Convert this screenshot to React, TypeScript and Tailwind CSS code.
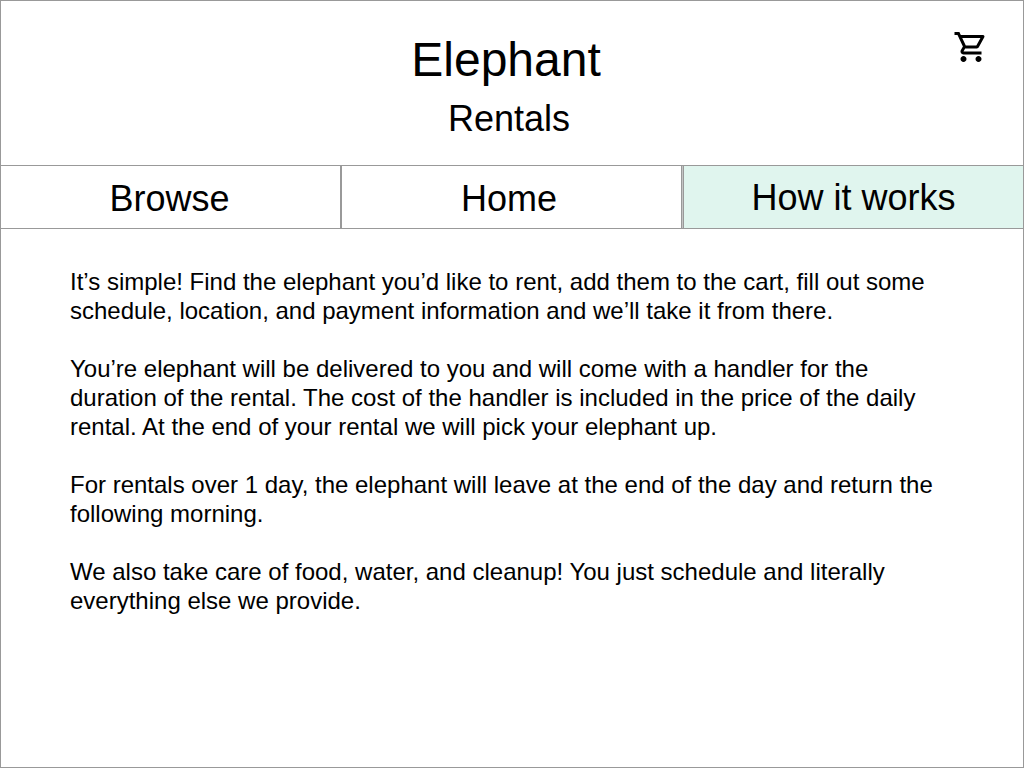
export default function App() {
  return (
    <div className="relative flex h-[768px] w-[1024px] flex-col overflow-hidden border border-[#999] bg-white text-black [font-family:'Liberation_Sans',Arial,sans-serif]">
      <header className="relative flex h-[164px] flex-col items-center">
        <h1 className="mt-[30px] mr-[12px] text-[48px] leading-[58px]">Elephant</h1>
        <p className="mt-[8px] mr-[6px] text-[36px] leading-[44px]">Rentals</p>
        <svg className="absolute left-[952px] top-[27.5px] h-[36px] w-[36px]" viewBox="0 0 24 24" fill="currentColor">
          <path d="M15.55 13c.75 0 1.41-.41 1.75-1.03l3.58-6.49c.37-.66-.11-1.48-.87-1.48H5.21l-.94-2H1v2h2l3.6 7.59-1.35 2.44C4.52 15.37 5.48 17 7 17h12v-2H7l1.1-2h7.45zM6.16 6h12.15l-2.76 5H8.53L6.16 6zM7 18c-1.1 0-1.99.9-1.99 2S5.9 22 7 22s2-.9 2-2-.9-2-2-2zm10 0c-1.1 0-1.99.9-1.99 2s.89 2 1.99 2 2-.9 2-2-.9-2-2-2z" />
        </svg>
      </header>
      <nav className="flex h-[64px] border-y border-[#999] text-[36px] leading-[44px]">
        <div className="flex w-[340px] items-center justify-center border-r border-[#999] pt-[4px] pr-[2px]">Browse</div>
        <div className="flex w-[341px] items-center justify-center border-x border-[#999] pt-[4px] pr-[5px]">Home</div>
        <div className="w-px bg-[#c4c4c4]" />
        <div className="flex w-[340px] items-center justify-center border-l border-[#999] bg-[#e0f5ee] pt-[2px]">How it works</div>
      </nav>
      <main className="flex flex-col gap-[29px] pt-[38px] pl-[69px] pr-[70px] text-[24px] leading-[29px]">
        <p>It’s simple! Find the elephant you’d like to rent, add them to the cart, fill out some<br />schedule, location, and payment information and we’ll take it from there.</p>
        <p>You’re elephant will be delivered to you and will come with a handler for the<br />duration of the rental. The cost of the handler is included in the price of the daily<br />rental. At the end of your rental we will pick your elephant up.</p>
        <p>For rentals over 1 day, the elephant will leave at the end of the day and return the<br />following morning.</p>
        <p>We also take care of food, water, and cleanup! You just schedule and literally<br />everything else we provide.</p>
      </main>
    </div>
  );
}
